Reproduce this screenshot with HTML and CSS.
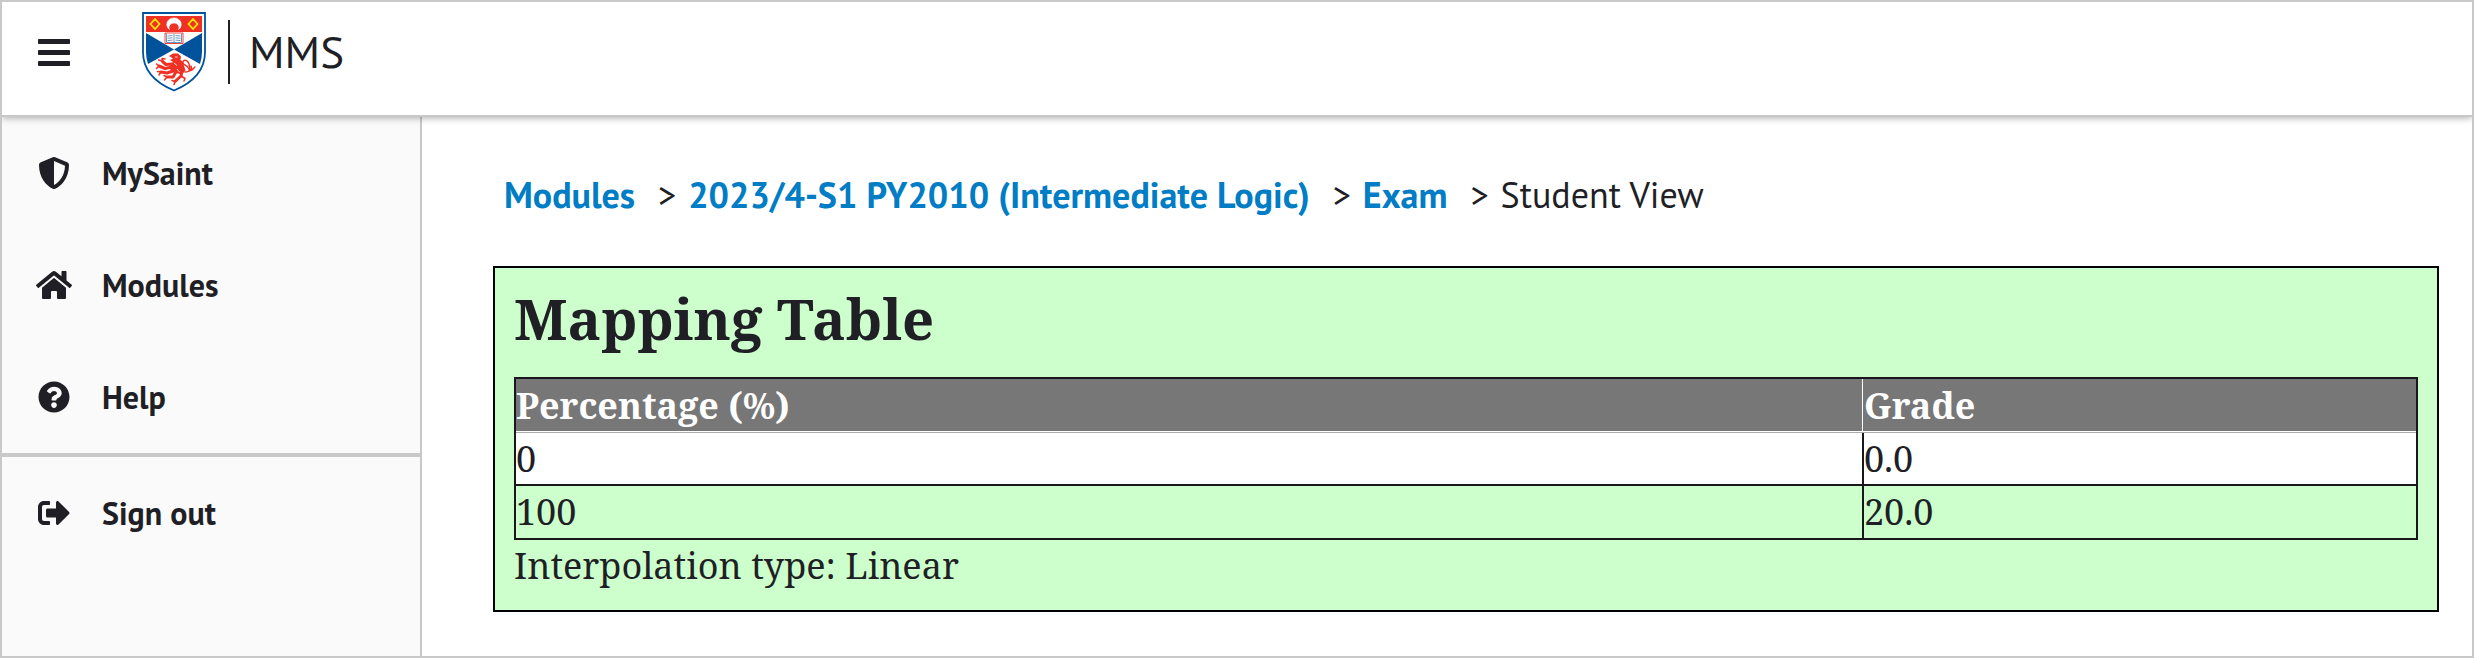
FILE: index.html
```html
<!DOCTYPE html>
<html lang="en">
<head>
<meta charset="utf-8">
<title>MMS</title>
<link rel="stylesheet" href="styles.css">
</head>
<body>
<div class="app">
  <header class="topbar">
    <svg class="menu" viewBox="0 0 32 27"><rect width="32" height="5" rx=".8"/><rect y="11" width="32" height="5" rx=".8"/><rect y="22" width="32" height="5" rx=".8"/></svg>
    <svg class="crest" viewBox="0 0 64 80">
      <path d="M1 1H63V40C63 60 50 71 32 78.500C14 71 1 60 1 40Z" fill="#fff" stroke="#00539b" stroke-width="1.800"/>
      <path d="M4 4H60V20H4Z" fill="#ee3124"/>
      <path d="M4 21L32 37.500L60 21V40Q60 46 58 52L32 37.500L6 52Q4 46 4 40Z" fill="#00539b"/>
      <path d="M13 7L17.500 12L13 17L8.500 12ZM51 7L55.500 12L51 17L46.500 12Z" fill="none" stroke="#ffe800" stroke-width="1.800"/>
      <path d="M27.500 17.500A7.300 6.500 0 1 1 36.500 17.500A5 4.500 0 1 0 27.500 17.500Z" fill="#fff" stroke="#fff" stroke-width=".6"/>
      <path d="M23 21H41V31.500H23Z" fill="#fff" stroke="#ee3124" stroke-width=".9"/>
      <path d="M24.500 21.500V30.500H39.500V21.500M32 22V31M25.500 24L30.500 23.500M25.500 26.300L30.500 25.800M25.500 28.600L30.500 28.100M33.500 23.500L38.500 24M33.500 25.800L38.500 26.300M33.500 28.100L38.500 28.600" fill="none" stroke="#4e7eb0" stroke-width=".8"/>
      <path d="M27 44L31 41.500L36 41.500L39 44.500L38.500 48L41 50L42 54L43.500 58L42 60.500L38 62L34 61L30 60L28 57L29 52L31 50L28 48L31 46.500Z" fill="#ee3124"/>
      <g fill="none" stroke="#ee3124" stroke-linejoin="round" stroke-linecap="round">
        <path d="M30 52L24 52.500L20.500 49.500M30 55L23 56.500L17 54M31 59L25 61L19 60M34 60L31 65L25 65M40 59L39 64L33 69.500" stroke-width="3"/>
        <path d="M20.500 49L16.500 48M20.500 49L20 46.500L23 47M17 54L14.500 52M17 54L14.500 56.500M19 60L15.500 59.500M19 60L17 63M25 65L22 63.500M25 65L22.500 68M33 69.500L30 68.500M33 69.500L32 72.500M39 64L43 66.500L42 69" stroke-width="1.500"/>
        <path d="M43 60C50 60 47 55 43 53C38 50 43 46 46 50C49 54 46 58 50 58L53 55M49 54L50 58L47 59" stroke-width="1.400"/>
      </g>
      <path d="M33 45H35.500M32 51L35 53.500M35 57L37.500 60" stroke="#fff" stroke-width=".8"/>
    </svg>
    <span class="brand">MMS</span>
  </header>
  <div class="body">
    <nav class="sidebar">
      <a class="item"><svg class="icon" viewBox="0 0 512 512"><path d="M466.500 83.700l-192-80a48.150 48.150 0 0 0-36.900 0l-192 80C27.700 91.100 16 108.600 16 128c0 198.500 114.500 335.700 221.500 380.300 11.800 4.900 25.100 4.900 36.900 0C360.100 472.600 496 349.300 496 128c0-19.400-11.700-36.900-29.500-44.300zM256.100 446.300l-.1-381 175.900 73.300c-3.300 151.400-82.100 261.100-175.800 307.700z"/></svg>MySaint</a>
      <a class="item"><svg class="icon" viewBox="0 0 576 512"><path d="M280.370 148.260L96 300.110V464a16 16 0 0 0 16 16l112.060-.29a16 16 0 0 0 15.920-16V368a16 16 0 0 1 16-16h64a16 16 0 0 1 16 16v95.640a16 16 0 0 0 16 16.050L464 480a16 16 0 0 0 16-16V300L295.670 148.260a12.190 12.190 0 0 0-15.300 0zM571.600 251.470L488 182.560V44.050a12 12 0 0 0-12-12h-56a12 12 0 0 0-12 12v72.610L318.470 43a48 48 0 0 0-61 0L4.340 251.470a12 12 0 0 0-1.600 16.900l25.500 31A12 12 0 0 0 45.150 301l235.220-193.740a12.190 12.190 0 0 1 15.300 0L530.900 301a12 12 0 0 0 16.900-1.600l25.500-31a12 12 0 0 0-1.700-16.930z"/></svg>Modules</a>
      <a class="item"><svg class="icon" viewBox="0 0 512 512"><path d="M504 256c0 136.997-111.043 248-248 248S8 392.997 8 256C8 119.083 119.043 8 256 8s248 111.083 248 248zM262.655 90c-54.497 0-89.255 22.957-116.549 63.758-3.536 5.286-2.353 12.415 2.715 16.258l34.699 26.310c5.205 3.947 12.621 3.008 16.665-2.122 17.864-22.658 30.113-35.797 57.303-35.797 20.429 0 45.698 13.148 45.698 32.958 0 14.976-12.363 22.667-32.534 33.976C247.128 238.528 216 254.941 216 296v4c0 6.627 5.373 12 12 12h56c6.627 0 12-5.373 12-12v-1.333c0-28.462 83.186-29.647 83.186-106.667 0-58.002-60.165-102-116.531-102zM256 338c-25.365 0-46 20.635-46 46 0 25.364 20.635 46 46 46s46-20.636 46-46c0-25.365-20.635-46-46-46z"/></svg>Help</a>
      <hr class="rule">
      <a class="item"><svg class="icon" viewBox="0 0 512 512"><path d="M497 273L329 441c-15 15-41 4.500-41-17v-96H152c-13.300 0-24-10.700-24-24v-96c0-13.300 10.700-24 24-24h136V88c0-21.400 25.900-32 41-17l168 168c9.300 9.400 9.300 24.600 0 34zM192 436v-40c0-6.600-5.400-12-12-12H96c-17.700 0-32-14.300-32-32V160c0-17.700 14.300-32 32-32h84c6.600 0 12-5.400 12-12V76c0-6.600-5.400-12-12-12H96c-53 0-96 43-96 96v192c0 53 43 96 96 96h84c6.600 0 12-5.400 12-12z"/></svg>Sign out</a>
    </nav>
    <main class="content">
      <div class="crumbs"><a>Modules</a><span class="sep">&gt;</span><a>2023/4-S1 PY2010 (Intermediate Logic)</a><span class="sep">&gt;</span><a>Exam</a><span class="sep">&gt;</span><span>Student View</span></div>
      <section class="card">
        <h1 class="title">Mapping Table</h1>
        <div class="table">
          <div class="row head"><div class="cell">Percentage (%)</div><div class="cell">Grade</div></div>
          <div class="row plain"><div class="cell">0</div><div class="cell">0.0</div></div>
          <div class="row last"><div class="cell">100</div><div class="cell">20.0</div></div>
        </div>
        <p class="note">Interpolation type: Linear</p>
      </section>
    </main>
  </div>
</div>
</body>
</html>
```
FILE: styles.css
```css
* { box-sizing: border-box; }
body { margin: 0; background: #fff; color: #211f26; font-family: "PT Sans", "Open Sans", sans-serif; }
.app { height: 658px; border: 2px solid #c8c8c8; display: flex; flex-direction: column; overflow: hidden; }
.topbar { position: relative; flex: none; height: 113px; padding-left: 36px; display: flex; align-items: flex-start; background: #fff; box-shadow: 0 0 0 2px #c8c8c8, 0 2px 8px rgba(0, 0, 0, .4); clip-path: inset(0 0 -12px 0); }
.menu { width: 32px; height: 27px; margin-top: 37px; fill: #211f26; }
.crest { width: 64px; height: 80px; margin: 10px 0 0 72px; }
.brand { margin: 18px 0 0 22px; height: 64px; padding-left: 19px; border-left: 2px solid #211f26; font-size: 45px; line-height: 62px; }
.body { flex: 1; display: flex; min-height: 0; }
.sidebar { width: 420px; flex: none; padding-top: 2px; background: #fafafa; border-right: 2px solid #c8c8c8; }
.item { display: flex; align-items: center; gap: 30px; height: 112px; padding-left: 34px; font-size: 32px; font-weight: 700; line-height: 40px; }
.icon { width: 36px; height: 32px; fill: #211f26; }
.rule { margin: 0; height: 4px; border: 0; background: #c8c8c8; }
.content { flex: 1; padding: 56px 33px 0 71px; }
.crumbs { display: flex; padding-left: 11px; font-size: 36px; line-height: 48px; white-space: nowrap; }
.crumbs a { color: #007dc5; font-weight: 700; }
.sep { margin: 0 12px 0 23px; }
.card { margin-top: 47px; height: 346px; padding: 20px 19px 0; border: 2px solid #000; background: #cfc; font-family: "Noto Serif", serif; font-size: 36px; }
.title { margin: 0; font-size: 56.2px; line-height: 60px; font-weight: 700; }
.table { margin-top: 29px; border: 2px solid #17171c; }
.row { display: grid; grid-template-columns: 1346px 1fr; border-bottom: 2px solid #17171c; }
.cell { height: 52px; line-height: 54px; }
.cell + .cell { border-left: 2px solid #17171c; }
.head { background: #777; color: #fff; font-weight: 700; border-bottom: 2px ridge #fff; }
.head .cell + .cell { border-left: 1px solid #fff; padding-left: 1px; }
.plain { background: #fff; }
.plain .cell { height: 51px; line-height: 52px; }
.last { border-bottom: 0; }
.last .cell { line-height: 51px; }
.note { margin: 0; line-height: 51px; }
```
